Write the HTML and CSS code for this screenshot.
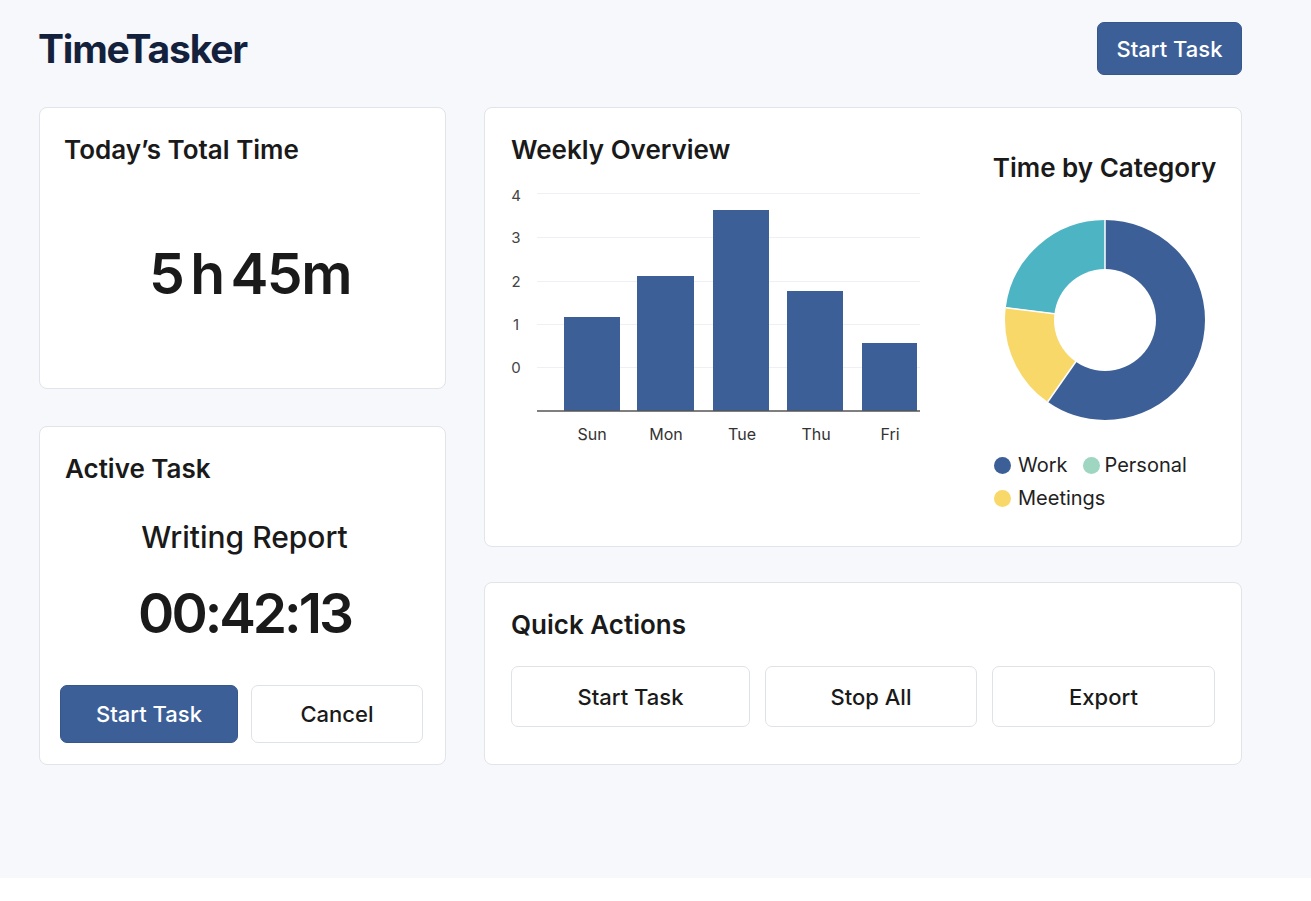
FILE: index.html
```html
<!DOCTYPE html>
<html lang="en">
<head>
<meta charset="utf-8">
<title>TimeTasker</title>
<link rel="stylesheet" href="styles.css">
</head>
<body>
<div class="page">
  <header class="header">
    <h1 class="brand">TimeTasker</h1>
    <button class="btn btn-primary btn-header">Start Task</button>
  </header>
  <main class="grid">
    <div class="col col-left">
      <section class="card card-total">
        <h2 class="card-title">Today’s Total Time</h2>
        <div class="total-value">5 h 45m</div>
      </section>
      <section class="card card-active">
        <h2 class="card-title">Active Task</h2>
        <div class="task-name">Writing Report</div>
        <div class="task-timer">00:42:13</div>
        <div class="task-buttons">
          <button class="btn btn-primary btn-start">Start Task</button>
          <button class="btn btn-outline btn-cancel">Cancel</button>
        </div>
      </section>
    </div>
    <div class="col col-right">
      <section class="card card-overview">
        <div class="weekly">
          <h2 class="card-title">Weekly Overview</h2>
          <svg class="bar-chart" width="410" height="262" viewBox="0 0 410 262">
            <g class="grid-lines">
              <line x1="26" y1="9.5" x2="409" y2="9.5"/>
              <line x1="26" y1="53.5" x2="409" y2="53.5"/>
              <line x1="26" y1="97.5" x2="409" y2="97.5"/>
              <line x1="26" y1="140.5" x2="409" y2="140.5"/>
              <line x1="26" y1="183.5" x2="409" y2="183.5"/>
            </g>
            <g class="y-labels">
              <text x="5" y="17">4</text>
              <text x="5" y="59">3</text>
              <text x="5" y="103">2</text>
              <text x="5" y="146">1</text>
              <text x="5" y="189">0</text>
            </g>
            <g class="bars">
              <rect x="53" y="133" width="56" height="94"/>
              <rect x="126" y="92" width="57" height="135"/>
              <rect x="202" y="26" width="56" height="201"/>
              <rect x="276" y="107" width="56" height="120"/>
              <rect x="351" y="159" width="55" height="68"/>
            </g>
            <line class="axis" x1="26" y1="227" x2="409" y2="227"/>
            <g class="x-labels">
              <text x="81" y="256">Sun</text>
              <text x="155" y="256">Mon</text>
              <text x="231" y="256">Tue</text>
              <text x="305" y="256">Thu</text>
              <text x="379" y="256">Fri</text>
            </g>
          </svg>
        </div>
        <div class="category">
          <h2 class="card-title">Time by Category</h2>
          <svg class="donut" width="202" height="202" viewBox="0 0 202 202">
            <g transform="rotate(-90 101 101)">
              <circle class="seg seg-work" cx="101" cy="101" r="75" stroke-dasharray="281.4 471.2" stroke-dashoffset="0"/>
              <circle class="seg seg-meet" cx="101" cy="101" r="75" stroke-dasharray="81.2 471.2" stroke-dashoffset="-281.4"/>
              <circle class="seg seg-pers" cx="101" cy="101" r="75" stroke-dasharray="108.6 471.2" stroke-dashoffset="-362.6"/>
            </g>
            <g class="seps">
              <line x1="101" y1="0" x2="101" y2="52"/>
              <line x1="101" y1="101" x2="43.6" y2="183"/>
              <line x1="101" y1="101" x2="2" y2="88.8"/>
            </g>
            <circle cx="101" cy="101" r="51" class="hole"/>
          </svg>
          <div class="legend">
            <span class="legend-item"><span class="dot dot-work"></span>Work</span>
            <span class="legend-item"><span class="dot dot-pers"></span>Personal</span>
            <span class="legend-item"><span class="dot dot-meet"></span>Meetings</span>
          </div>
        </div>
      </section>
      <section class="card card-actions">
        <h2 class="card-title">Quick Actions</h2>
        <div class="action-row">
          <button class="btn btn-outline btn-action">Start Task</button>
          <button class="btn btn-outline btn-action">Stop All</button>
          <button class="btn btn-outline btn-action">Export</button>
        </div>
      </section>
    </div>
  </main>
</div>
</body>
</html>
```

FILE: styles.css
```css
* { box-sizing: border-box; }

html, body {
  margin: 0;
  padding: 0;
  background: #ffffff;
}

body {
  font-family: Inter, "Noto Sans", "Liberation Sans", sans-serif;
  color: #1a1a1a;
}

.page {
  height: 878px;
  background: #f6f8fb;
  padding: 22px 69px 0 39px;
}

.header {
  display: flex;
  justify-content: space-between;
  align-items: center;
  height: 53px;
}

.brand {
  margin: 0 0 0 -1px;
  font-size: 39px;
  line-height: 48px;
  font-weight: 700;
  color: #14213d;
  letter-spacing: -1.2px;
}

.btn {
  font-family: Inter, "Noto Sans", "Liberation Sans", sans-serif;
  font-size: 22px;
  font-weight: 500;
  border-radius: 7px;
  cursor: pointer;
  padding: 0;
}

.btn-primary {
  background: #3d5f98;
  color: #ffffff;
  border: 1px solid #36578e;
}

.btn-outline {
  background: #ffffff;
  color: #1a1a1a;
  border: 1px solid #dfe2e7;
}

.btn-header {
  width: 145px;
  height: 53px;
}

.grid {
  display: grid;
  grid-template-columns: 407px 758px;
  column-gap: 38px;
  margin-top: 32px;
}

.col {
  display: flex;
  flex-direction: column;
}

.col-left { gap: 37px; }
.col-right { gap: 35px; }

.card {
  background: #ffffff;
  border: 1px solid #e1e4e9;
  border-radius: 8px;
  padding: 26px 26px 0 26px;
}

.card-title {
  margin: 0;
  font-size: 26px;
  line-height: 32px;
  font-weight: 600;
  color: #1a1a1a;
  letter-spacing: 0;
}

/* Today's total */
.card-total {
  height: 282px;
  padding-left: 24px;
}

.total-value {
  margin-top: 78px;
  text-align: center;
  font-size: 57px;
  line-height: 60px;
  font-weight: 600;
  letter-spacing: -1.5px;
  word-spacing: -6px;
  color: #1a1a1a;
  padding-left: 17px;
}

/* Active task */
.card-active {
  height: 339px;
  padding-left: 20px;
  padding-right: 22px;
}

.card-active .card-title {
  padding-left: 5px;
}

.task-name {
  margin-top: 34px;
  text-align: center;
  font-size: 30px;
  line-height: 36px;
  font-weight: 500;
  letter-spacing: 0;
  padding-left: 6px;
}

.task-timer {
  margin-top: 28px;
  text-align: center;
  font-size: 55px;
  line-height: 60px;
  font-weight: 600;
  letter-spacing: -3px;
  padding-left: 6px;
}

.task-buttons {
  display: flex;
  gap: 13px;
  margin-top: 42px;
}

.btn-start {
  width: 178px;
  height: 58px;
}

.btn-cancel {
  width: 172px;
  height: 58px;
}

/* Overview */
.card-overview {
  height: 440px;
  display: flex;
  justify-content: space-between;
  padding-right: 26px;
}

.bar-chart {
  display: block;
  margin-top: 18px;
}

.grid-lines line {
  stroke: #eef0f3;
  stroke-width: 1;
}

.y-labels text {
  font-family: Inter, "Noto Sans", sans-serif;
  font-size: 15px;
  fill: #444;
  text-anchor: middle;
}

.x-labels text {
  font-family: Inter, "Noto Sans", sans-serif;
  font-size: 16px;
  fill: #333;
  text-anchor: middle;
}

.bars rect { fill: #3d5f98; }

.axis {
  stroke: #555;
  stroke-width: 1.5;
}

.category {
  width: 221px;
  padding-top: 18px;
  display: flex;
  flex-direction: column;
  align-items: center;
}

.category .card-title {
  white-space: nowrap;
}

.donut {
  display: block;
  margin-top: 35px;
}

.seg {
  fill: none;
  stroke-width: 50;
}

.seg-work { stroke: #3d5f98; }
.seg-meet { stroke: #f9d86a; }
.seg-pers { stroke: #4db4c4; }

.seps line {
  stroke: #ffffff;
  stroke-width: 1.5;
}

.hole { fill: #ffffff; }

.legend {
  align-self: stretch;
  display: flex;
  flex-wrap: wrap;
  column-gap: 15px;
  margin-top: 28px;
  font-size: 20px;
  line-height: 33px;
  color: #222;
}

.legend-item {
  display: inline-flex;
  align-items: center;
}

.dot {
  width: 17px;
  height: 17px;
  border-radius: 50%;
  margin-right: 7px;
}

.dot-work { background: #3d5f98; }
.dot-pers { background: #9fd6c2; margin-right: 5px; }
.dot-meet { background: #f9d86a; }

/* Quick actions */
.card-actions {
  height: 183px;
}

.action-row {
  display: grid;
  grid-template-columns: 239px 212px 223px;
  column-gap: 15px;
  margin-top: 25px;
}

.btn-action {
  height: 61px;
}
```
